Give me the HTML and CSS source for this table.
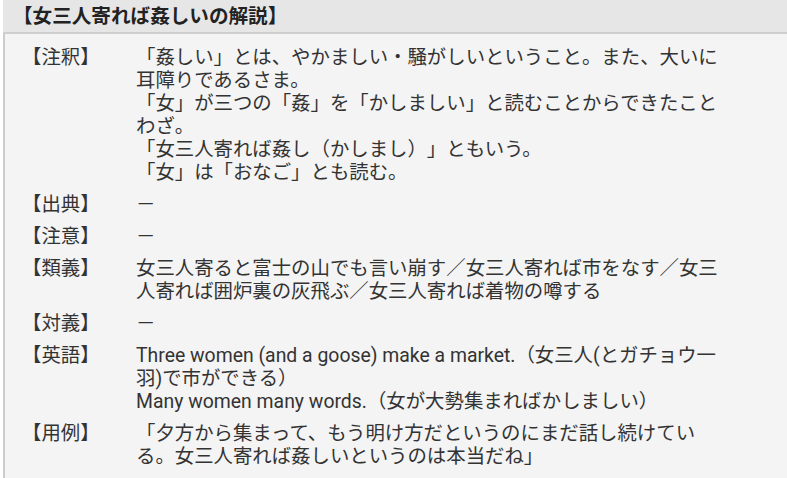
FILE: index.html
```html
<!DOCTYPE html>
<html lang="ja">
<head>
<meta charset="utf-8">
<title>女三人寄れば姦しいの解説</title>
<link rel="stylesheet" href="styles.css">
</head>
<body>
<div class="page">
  <h2 class="title">【女三人寄れば姦しいの解説】</h2>
  <div class="panel">
    <dl class="rows">
      <div class="row">
        <dt class="label">【注釈】</dt>
        <dd class="text">「姦しい」とは、やかましい・騒がしいということ。また、大いに耳障りであるさま。<br>「女」が三つの「姦」を「かしましい」と読むことからできたことわざ。<br>「女三人寄れば姦し（かしまし）」ともいう。<br>「女」は「おなご」とも読む。</dd>
      </div>
      <div class="row">
        <dt class="label">【出典】</dt>
        <dd class="text">－</dd>
      </div>
      <div class="row">
        <dt class="label">【注意】</dt>
        <dd class="text">－</dd>
      </div>
      <div class="row">
        <dt class="label">【類義】</dt>
        <dd class="text">女三人寄ると富士の山でも言い崩す／女三人寄れば市をなす／女三人寄れば囲炉裏の灰飛ぶ／女三人寄れば着物の噂する</dd>
      </div>
      <div class="row">
        <dt class="label">【対義】</dt>
        <dd class="text">－</dd>
      </div>
      <div class="row">
        <dt class="label">【英語】</dt>
        <dd class="text">Three women (and a goose) make a market.（女三人(とガチョウ一羽)で市ができる）<br>Many women many words.（女が大勢集まればかしましい）</dd>
      </div>
      <div class="row">
        <dt class="label">【用例】</dt>
        <dd class="text">「夕方から集まって、もう明け方だというのにまだ話し続けている。女三人寄れば姦しいというのは本当だね」</dd>
      </div>
    </dl>
  </div>
</div>
</body>
</html>
```
FILE: styles.css
```css
html, body {
  margin: 0;
  padding: 0;
  background: #ffffff;
  overflow: hidden;
}

body {
  padding-left: 3px;
  font-family: Roboto, "Noto Sans CJK JP", sans-serif;
  color: #333333;
}

.page {
  width: 800px;
}

.title {
  margin: 0;
  height: 32px;
  line-height: 33px;
  padding-left: 10px;
  background: #e6e6e6;
  border-bottom: 2px solid #cfcfcf;
  font-size: 19.6px;
  font-weight: bold;
  color: #222222;
  text-spacing-trim: space-all;
}

.panel {
  background: #f4f4f4;
  border-left: 2px solid #cccccc;
  padding: 12px 0 12px 17px;
  min-height: 430px;
}

.rows {
  margin: 0;
  display: flex;
  flex-direction: column;
  gap: 9px;
}

.row {
  display: grid;
  grid-template-columns: 114px 592px;
}

.label,
.text {
  margin: 0;
  font-size: 19.4px;
  line-height: 23px;
  text-spacing-trim: space-all;
}

.text {
  line-break: strict;
}
```
